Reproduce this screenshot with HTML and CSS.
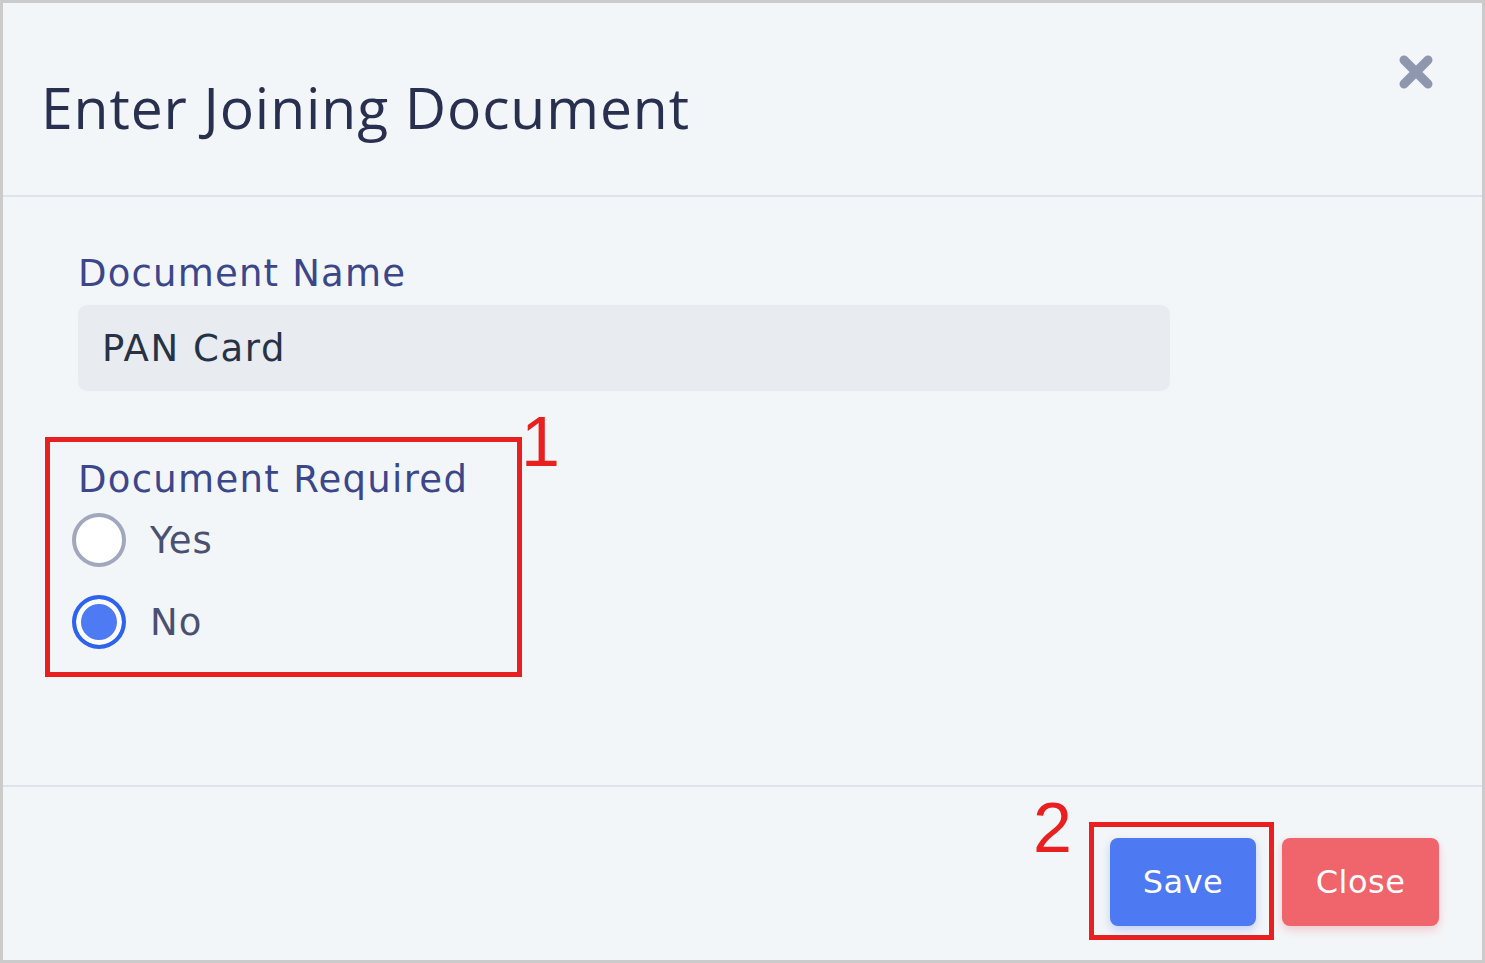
FILE: index.html
```html
<!DOCTYPE html>
<html>
<head>
<meta charset="utf-8">
<link rel="stylesheet" href="styles.css">
</head>
<body>
<div class="modal">
  <div class="modal-header">
    <h1 class="title">Enter Joining Document</h1>
    <button class="close-x" aria-label="close">
      <svg width="36" height="36" viewBox="0 0 36 36"><path d="M6 6 L30 30 M30 6 L6 30" stroke="#8e97ad" stroke-width="9" stroke-linecap="round"/></svg>
    </button>
  </div>
  <div class="modal-body">
    <div class="field">
      <label class="label">Document Name</label>
      <div class="input">PAN Card</div>
    </div>
    <div class="group-wrap">
      <div class="radio-group annot">
        <div class="label">Document Required</div>
        <div class="radio-row first"><span class="radio"></span><span class="radio-text">Yes</span></div>
        <div class="radio-row"><span class="radio checked"></span><span class="radio-text">No</span></div>
        <span class="num num1">1</span>
      </div>
    </div>
  </div>
  <div class="modal-footer">
    <div class="save-wrap annot">
      <button class="btn btn-save">Save</button>
      <span class="num num2">2</span>
    </div>
    <button class="btn btn-close">Close</button>
  </div>
</div>
</body>
</html>
```
FILE: styles.css
```css
* { box-sizing: border-box; }
html, body { margin: 0; padding: 0; background: #f3f6f8; }
body { font-family: "DejaVu Sans", sans-serif; }
.modal {
  width: 1485px; height: 963px;
  border: 3px solid #cbcbcb;
  background: #f3f6f8;
  display: flex; flex-direction: column;
}
.modal-header {
  height: 194px;
  border-bottom: 2px solid #dfe3ec;
  display: flex; justify-content: space-between; align-items: flex-start;
  padding: 0 48px 0 38px;
}
.title {
  margin: 72px 0 0 0;
  font-family: "Open Sans", sans-serif;
  font-weight: 500;
  font-size: 57px;
  line-height: 64px;
  color: #29304f;
  letter-spacing: 0.9px;
}
.close-x {
  margin-top: 51px;
  background: none; border: 0; padding: 0; width: 36px; height: 36px;
}
.close-x svg { display: block; }
.modal-body {
  height: 590px;
  border-bottom: 2px solid #dfe3ec;
  padding: 0 0 0 42px;
}
.field { padding: 52px 0 0 33px; width: 1125px; }
.label {
  font-family: "DejaVu Sans", sans-serif;
  font-size: 37px;
  line-height: 50px;
  color: #3b478a;
  letter-spacing: 1.2px;
}
.input {
  margin-top: 6px;
  height: 86px;
  background: #e8ebef;
  border-radius: 9px;
  padding-left: 24px;
  display: flex; align-items: center;
  font-size: 37px;
  letter-spacing: 1.6px;
  color: #263246;
}
.group-wrap { padding-top: 46px; }
.annot { border: 5px solid #e8201f; position: relative; }
.radio-group {
  width: 477px; height: 240px;
  padding: 13px 0 0 28px;
}
.radio-group .label { letter-spacing: 1.3px; }
.radio-row { display: flex; align-items: center; height: 82px; margin-left: -6px; }
.radio-row.first { margin-top: -6px; }
.radio {
  width: 54px; height: 54px; border-radius: 50%;
  border: 4px solid #a1a7bc; background: #fff;
  margin-right: 24px; flex: none;
}
.radio.checked {
  border-color: #2e63f0;
  background: #4e7af3;
  box-shadow: inset 0 0 0 5px #fff;
}
.radio-text { font-size: 37px; color: #4a5072; letter-spacing: 1px; }
.num {
  position: absolute;
  font-family: "Liberation Sans", sans-serif;
  color: #e8201f;
  font-size: 70px; line-height: 70px;
}
.num1 { left: 471px; top: -35px; }
.num2 { left: -61px; top: -34px; }
.modal-footer {
  flex: 1;
  display: flex; justify-content: flex-end; align-items: flex-start;
  padding: 35px 43px 0 0;
}
.save-wrap {
  width: 185px; height: 118px;
  padding: 11px 0 0 16px;
  margin-right: 8px;
}
.btn {
  border: 0; border-radius: 8px;
  height: 88px;
  font-family: "DejaVu Sans", sans-serif;
  font-size: 32px; color: #fff;
  letter-spacing: 0.5px;
}
.btn-save { width: 146px; background: #4d79f2; box-shadow: 0 4px 10px rgba(77,121,242,0.3); }
.btn-close { width: 157px; background: #f0646c; margin-top: 16px; box-shadow: 0 4px 10px rgba(240,100,108,0.3); }
```
